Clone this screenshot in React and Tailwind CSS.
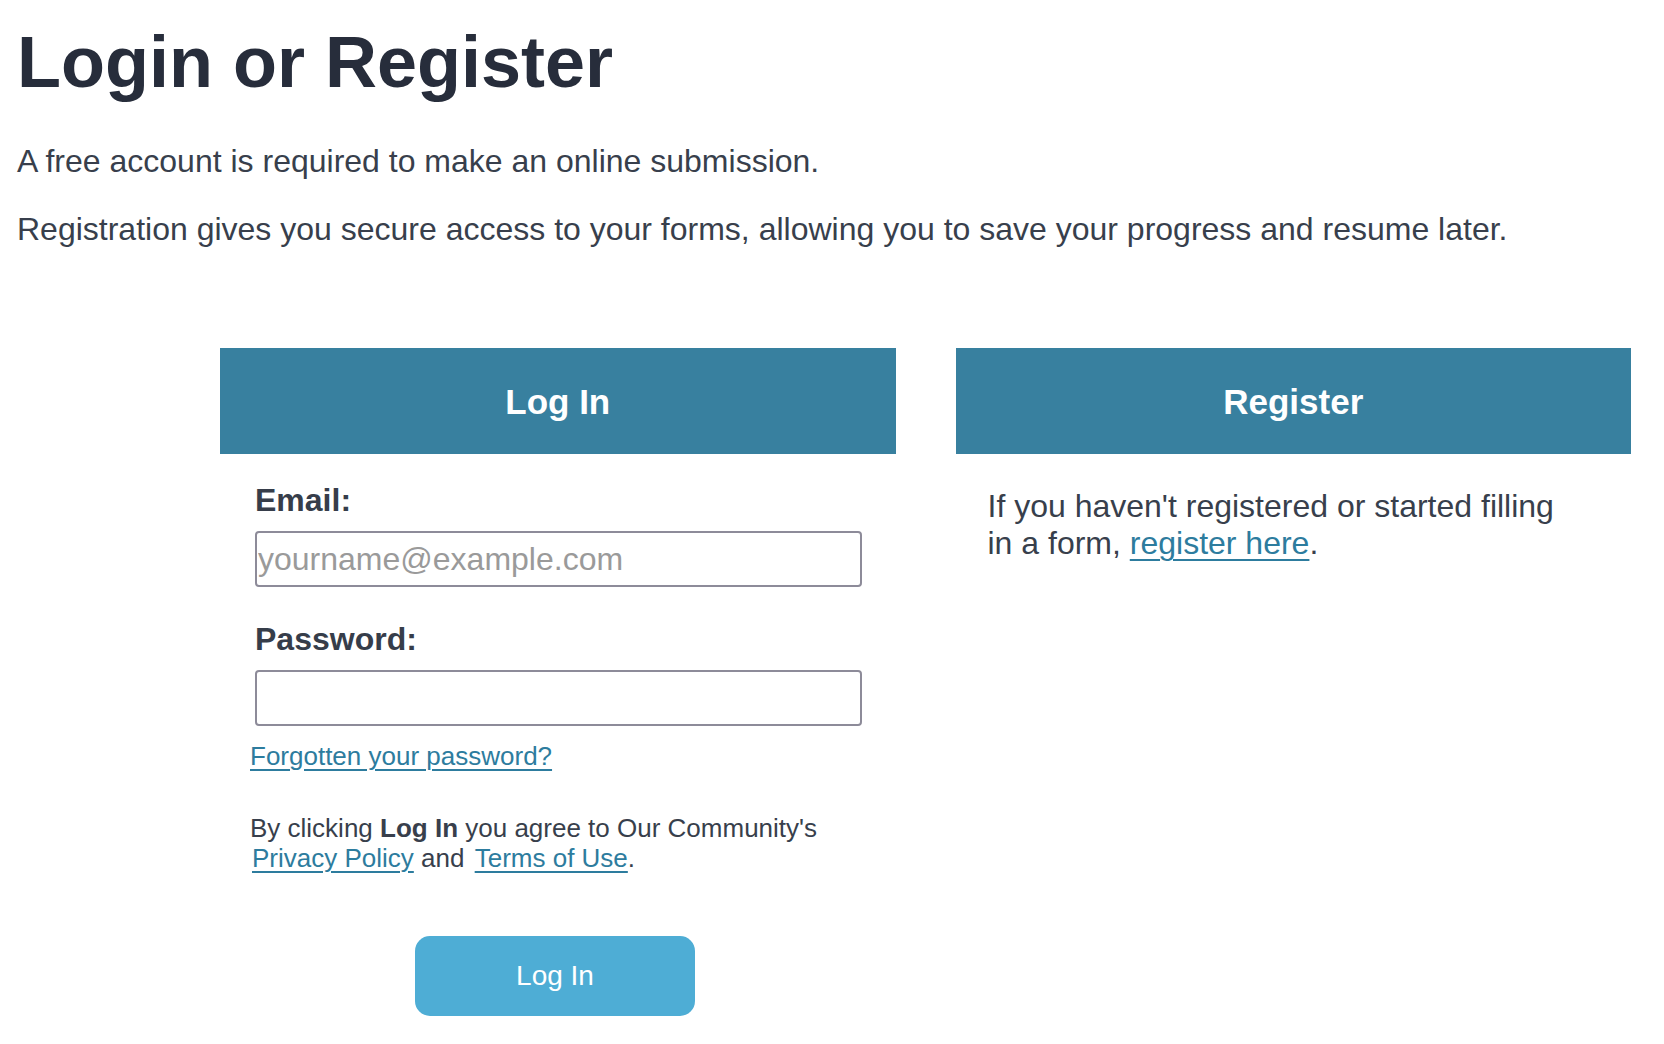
import { useState } from 'react'

function PanelHeader({ children }){
  return (
    <div className="h-[106px] bg-[#38809f] flex items-center justify-center">
      <h2 className="text-white font-bold text-[35px] leading-none">{children}</h2>
    </div>
  )
}

function Field({ label, type, placeholder, value, onChange }){
  return (
    <div className="pl-[5px]">
      <label className="block text-[32px] leading-[36px] font-bold text-[#363d4a]">{label}</label>
      <input
        type={type}
        value={value}
        onChange={(e)=>onChange(e.target.value)}
        placeholder={placeholder}
        className="mt-[13px] block w-[607px] h-[56px] border-2 border-[#8d8b99] rounded-[4px] px-[1px] text-[32px] text-[#363d4a] placeholder-[#9a9a9a] outline-none"
      />
    </div>
  )
}

export default function App(){
  const [email, setEmail] = useState('')
  const [password, setPassword] = useState('')

  return (
    <div className="min-h-screen bg-white px-[17px] pt-[22px] font-['Liberation_Sans',Arial,sans-serif] text-[#383f4c]">
      <h1 className="text-[72px] leading-[80px] font-bold text-[#272d3b]">Login or Register</h1>

      <p className="mt-[39px] text-[32px] leading-[40px]">A free account is required to make an online submission.</p>
      <p className="mt-[28px] text-[32px] leading-[40px]">Registration gives you secure access to your forms, allowing you to save your progress and resume later.</p>

      {/* panels */}
      <div className="mt-[99px] ml-[203px] w-[1411px] grid grid-cols-2 gap-[60px]">
        <section>
          <PanelHeader>Log In</PanelHeader>
          <form onSubmit={(e)=>e.preventDefault()} className="pl-[30px] pr-[34px] pt-[28px]">
            <Field label="Email:" type="email" placeholder="yourname@example.com" value={email} onChange={setEmail}/>
            <div className="mt-[34px]">
              <Field label="Password:" type="password" placeholder="" value={password} onChange={setPassword}/>
            </div>
            <a href="#" className="mt-[15px] inline-block text-[26px] leading-[30px] text-[#2d7c9e] underline decoration-2 underline-offset-[4px]">Forgotten your password?</a>
            <p className="mt-[41px] text-[26px] leading-[30px] text-[#383f4c]">
              By clicking <strong className="font-bold">Log In</strong> you agree to Our Community's{' '}
              <a href="#" className="ml-[2px] text-[#2d7c9e] underline decoration-2 underline-offset-[4px]">Privacy Policy</a> and{' '}
              <a href="#" className="ml-[3px] text-[#2d7c9e] underline decoration-2 underline-offset-[4px]">Terms of Use</a>.
            </p>
            <button type="submit" className="mt-[63px] ml-[165px] w-[280px] h-[80px] rounded-[15px] bg-[#4eadd5] text-white text-[28px]">Log In</button>
          </form>
        </section>

        <section>
          <PanelHeader>Register</PanelHeader>
          <p className="pl-[32px] pt-[34px] w-[612px] text-[32px] leading-[37px] text-[#383f4c]">
            If you haven't registered or started filling in a form,{' '}
            <a href="#" className="text-[#2d7c9e] underline decoration-2 underline-offset-[5px]">register here</a>.
          </p>
        </section>
      </div>
    </div>
  )
}
